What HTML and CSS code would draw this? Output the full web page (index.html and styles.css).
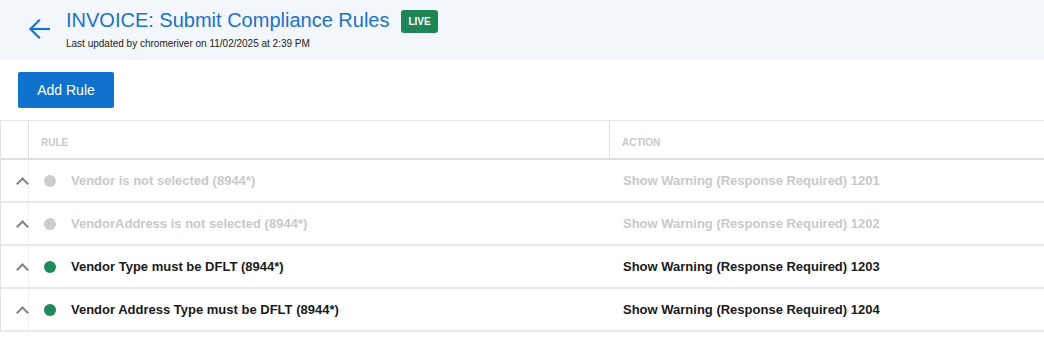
FILE: index.html
```html
<!DOCTYPE html>
<html lang="en">
<head>
  <meta charset="UTF-8">
  <meta name="viewport" content="width=device-width, initial-scale=1.0">
  <title>Compliance Rules</title>
  <link rel="stylesheet" href="styles.css">
</head>
<body>
  <div class="page-header">
    <a class="back" href="#">
      <svg width="22" height="22" viewBox="0 0 22 22" fill="none" stroke="currentColor" stroke-width="2.2" stroke-linecap="square">
        <path d="M21 11H3"/>
        <path d="M11 2.5L2.5 11 11 19.5"/>
      </svg>
    </a>
    <div class="heading">
      <div class="title-line">
        <h1 class="title">INVOICE: Submit Compliance Rules</h1>
        <span class="badge">LIVE</span>
      </div>
      <div class="updated">Last updated by chromeriver on 11/02/2025 at 2:39 PM</div>
    </div>
  </div>

  <div class="toolbar">
    <button class="btn-primary">Add Rule</button>
  </div>

  <div class="rules">
    <div class="row head">
      <div class="cell toggle"></div>
      <div class="cell rule">RULE</div>
      <div class="cell action">ACTION</div>
    </div>

    <div class="row inactive">
      <div class="cell toggle"><span class="chevron"></span></div>
      <div class="cell rule"><span class="dot"></span>Vendor is not selected (8944*)</div>
      <div class="cell action">Show Warning (Response Required) 1201</div>
    </div>

    <div class="row inactive">
      <div class="cell toggle"><span class="chevron"></span></div>
      <div class="cell rule"><span class="dot"></span>VendorAddress is not selected (8944*)</div>
      <div class="cell action">Show Warning (Response Required) 1202</div>
    </div>

    <div class="row">
      <div class="cell toggle"><span class="chevron"></span></div>
      <div class="cell rule"><span class="dot"></span>Vendor Type must be DFLT (8944*)</div>
      <div class="cell action">Show Warning (Response Required) 1203</div>
    </div>

    <div class="row">
      <div class="cell toggle"><span class="chevron"></span></div>
      <div class="cell rule"><span class="dot"></span>Vendor Address Type must be DFLT (8944*)</div>
      <div class="cell action">Show Warning (Response Required) 1204</div>
    </div>
  </div>
</body>
</html>
```

FILE: styles.css
```css
body {
  margin: 0;
  font-family: "Liberation Sans", Arial, sans-serif;
  background-color: #fff;
  color: #1a1a1a;
}

.page-header {
  background-color: #f3f6fa;
  height: 60px;
  box-sizing: border-box;
  padding: 8px 0 0 28px;
  display: flex;
  align-items: flex-start;
}

.back {
  color: #1b74c9;
  display: flex;
  margin-top: 10px;
  margin-right: 16px;
}

.heading {
  display: flex;
  flex-direction: column;
}

.title-line {
  display: flex;
  align-items: center;
  height: 24px;
}

.title {
  margin: 0;
  font-size: 20px;
  font-weight: normal;
  line-height: 24px;
  color: #1b74c9;
}

.badge {
  margin-left: 12px;
  margin-top: 3px;
  background-color: #1f8557;
  color: #fff;
  font-size: 10px;
  font-weight: bold;
  height: 23px;
  line-height: 23px;
  padding: 0 7px;
  border-radius: 3px;
}

.updated {
  margin-top: 6px;
  font-size: 10px;
  line-height: 12px;
  color: #222;
}

.toolbar {
  padding: 12px 18px;
}

.btn-primary {
  display: block;
  width: 96px;
  height: 36px;
  border: none;
  border-radius: 2px;
  background-color: #0f72cd;
  color: #fff;
  font-family: inherit;
  font-size: 14px;
  cursor: pointer;
}

.rules {
  border-top: 1px solid #e6e6e6;
  border-left: 1px solid #e2e2e2;
}

.row {
  display: grid;
  grid-template-columns: 28px 581px 1fr;
  height: 41px;
  border-bottom: 2px solid #e9e9e9;
  font-size: 13px;
  font-weight: bold;
}

.row.head {
  height: 37px;
  border-bottom-color: #dedede;
  font-size: 10px;
  color: #c9c9c9;
}

.cell {
  display: flex;
  align-items: center;
}

.cell.toggle {
  border-right: 1px solid #f0f0f0;
}

.head .cell {
  padding-top: 6px;
}

.head .cell.toggle,
.head .cell.rule {
  border-right: 1px solid #e0e0e0;
}

.head .cell.rule,
.head .cell.action {
  padding-left: 12px;
}

.cell.rule {
  padding-left: 15px;
}

.cell.action {
  padding-left: 13px;
}

.chevron {
  width: 7px;
  height: 7px;
  margin-left: 17px;
  margin-top: 5px;
  border-top: 2px solid #808080;
  border-left: 2px solid #808080;
  transform: rotate(45deg);
  flex: none;
}

.dot {
  width: 12px;
  height: 12px;
  border-radius: 50%;
  background-color: #1f8a5b;
  margin-right: 15px;
  flex: none;
}

.row.inactive {
  color: #c9c9c9;
}

.row.inactive .dot {
  background-color: #cbcdd1;
}
```
